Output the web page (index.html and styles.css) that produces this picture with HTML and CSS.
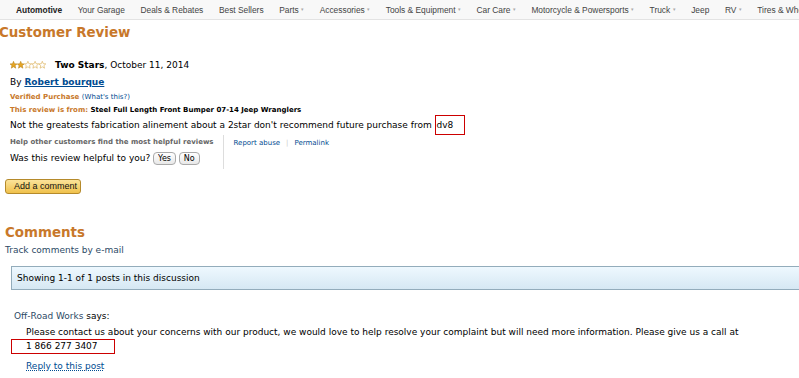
FILE: index.html
```html
<!DOCTYPE html>
<html>
<head>
  <meta charset="UTF-8">
  <title>Customer Review</title>
  <link rel="stylesheet" href="styles.css">
</head>
<body>
  <div class="topnav">
    <span class="nav-item active">Automotive</span>
    <span class="nav-item">Your Garage</span>
    <span class="nav-item">Deals &amp; Rebates</span>
    <span class="nav-item">Best Sellers</span>
    <span class="nav-item">Parts <span class="caret">&#9662;</span></span>
    <span class="nav-item">Accessories <span class="caret">&#9662;</span></span>
    <span class="nav-item">Tools &amp; Equipment <span class="caret">&#9662;</span></span>
    <span class="nav-item">Car Care <span class="caret">&#9662;</span></span>
    <span class="nav-item">Motorcycle &amp; Powersports <span class="caret">&#9662;</span></span>
    <span class="nav-item">Truck <span class="caret">&#9662;</span></span>
    <span class="nav-item">Jeep</span>
    <span class="nav-item">RV <span class="caret">&#9662;</span></span>
    <span class="nav-item">Tires &amp; Wheels</span>
  </div>

  <h1 class="page-title">Customer Review</h1>

  <div class="review">
    <div class="review-head">
      <svg class="stars" width="36" height="8" viewBox="0 0 36 8">
        <polygon points="3.5,0.3 4.5,2.7 7,2.9 5.1,4.6 5.7,7.2 3.5,5.8 1.3,7.2 1.9,4.6 0,2.9 2.5,2.7" fill="#e5a524" stroke="#b07a10" stroke-width="0.5"/>
        <polygon transform="translate(7.2,0)" points="3.5,0.3 4.5,2.7 7,2.9 5.1,4.6 5.7,7.2 3.5,5.8 1.3,7.2 1.9,4.6 0,2.9 2.5,2.7" fill="#e5a524" stroke="#b07a10" stroke-width="0.5"/>
        <polygon transform="translate(14.4,0)" points="3.5,0.3 4.5,2.7 7,2.9 5.1,4.6 5.7,7.2 3.5,5.8 1.3,7.2 1.9,4.6 0,2.9 2.5,2.7" fill="#fff" stroke="#d9a94a" stroke-width="0.6"/>
        <polygon transform="translate(21.6,0)" points="3.5,0.3 4.5,2.7 7,2.9 5.1,4.6 5.7,7.2 3.5,5.8 1.3,7.2 1.9,4.6 0,2.9 2.5,2.7" fill="#fff" stroke="#d9a94a" stroke-width="0.6"/>
        <polygon transform="translate(28.8,0)" points="3.5,0.3 4.5,2.7 7,2.9 5.1,4.6 5.7,7.2 3.5,5.8 1.3,7.2 1.9,4.6 0,2.9 2.5,2.7" fill="#fff" stroke="#d9a94a" stroke-width="0.6"/>
      </svg>
      <span><b>Two Stars</b>, October 11, 2014</span>
    </div>
    <div class="byline">By <a class="author">Robert bourque</a></div>
    <div class="verified">Verified Purchase <span class="whats">(<a>What's this?</a>)</span></div>
    <div class="from"><span class="from-label">This review is from:</span> Steel Full Length Front Bumper 07-14 Jeep Wranglers</div>
    <p class="review-text">Not the greatests fabrication alinement about a 2star don't recommend future purchase from <span class="marked">dv8</span></p>

    <div class="helpful-row">
      <div class="helpful">
        <div class="helpful-note">Help other customers find the most helpful reviews</div>
        <div class="helpful-ask">Was this review helpful to you? <span class="vote">Yes</span> <span class="vote">No</span></div>
      </div>
      <div class="review-links">
        <a>Report abuse</a><span class="sep">|</span><a>Permalink</a>
      </div>
    </div>

    <span class="add-comment">Add a comment</span>
  </div>

  <div class="comments">
    <h2 class="comments-title">Comments</h2>
    <div class="track">Track comments by e-mail</div>
    <div class="posts-bar">Showing 1-1 of 1 posts in this discussion</div>

    <div class="post">
      <div class="post-author"><a>Off-Road Works</a> says:</div>
      <div class="post-body">
        Please contact us about your concerns with our product, we would love to help resolve your complaint but will need more information. Please give us a call at<br>
        <span class="phone">1 866 277 3407</span>
      </div>
      <a class="reply">Reply to this post</a>
    </div>
  </div>
</body>
</html>
```

FILE: styles.css
```css
* {
  margin: 0;
  padding: 0;
  box-sizing: border-box;
}

body {
  font-family: "DejaVu Sans", Verdana, sans-serif;
  font-size: 9px;
  color: #000;
  background: #fff;
  overflow: hidden;
}

a {
  color: #004b91;
}

.topnav {
  display: flex;
  height: 20px;
  align-items: center;
  padding-left: 16px;
  background: #f8f8f8;
  border-bottom: 1px solid #e3e3e3;
  font-family: "Liberation Sans", Arial, sans-serif;
  font-size: 8.4px;
  color: #444;
  white-space: nowrap;
  overflow: hidden;
}

.nav-item {
  margin-right: 15.6px;
}

.nav-item.active {
  font-weight: bold;
  color: #222;
}

.caret {
  font-size: 5px;
  color: #aaa;
  vertical-align: 2px;
}

.page-title {
  font-size: 13.4px;
  font-weight: bold;
  color: #c8782a;
  margin: 3px 0 0 -1px;
  line-height: 20px;
}

.review {
  padding: 15px 0 0 10px;
}

.review-head {
  display: flex;
  align-items: center;
  gap: 9px;
  line-height: 14px;
}

.stars {
  display: block;
}

.byline {
  margin-top: 3px;
  line-height: 14px;
}

.author {
  font-weight: bold;
  text-decoration: underline;
}

.verified {
  margin-top: 2px;
  font-size: 7px;
  font-weight: bold;
  color: #c8782a;
  line-height: 12px;
}

.whats {
  font-weight: normal;
  color: #004b91;
}

.from {
  font-size: 7px;
  font-weight: bold;
  line-height: 12px;
  margin-top: 1px;
}

.from-label {
  color: #c8782a;
}

.review-text {
  line-height: 17px;
  margin-top: -1px;
}

.marked {
  display: inline-block;
  border: 1.5px solid #c00;
  padding: 1px 11px 1px 1px;
  line-height: 16px;
}

.helpful-row {
  display: flex;
  margin-top: 0;
}

.helpful {
  padding-right: 9px;
  border-right: 1px solid #ddd;
  padding-top: 2px;
  padding-bottom: 4px;
}

.helpful-note {
  font-size: 7px;
  font-weight: bold;
  color: #666;
  line-height: 10px;
}

.helpful-ask {
  margin-top: 4px;
  line-height: 14px;
}

.vote {
  display: inline-block;
  font-size: 8px;
  padding: 0 4px;
  border: 1px solid #aaa;
  border-radius: 4px;
  background: linear-gradient(#fff, #e8e8e8);
  line-height: 11px;
}

.review-links {
  padding: 3px 0 0 10px;
  font-size: 7px;
  line-height: 10px;
}

.review-links a {
  color: #004b91;
}

.sep {
  color: #ccc;
  margin: 0 6px;
}

.add-comment {
  display: inline-block;
  margin: 10px 0 0 -5px;
  width: 76px;
  height: 15px;
  line-height: 13px;
  padding-left: 8px;
  font-family: "Liberation Sans", Arial, sans-serif;
  font-size: 9px;
  white-space: nowrap;
  color: #111;
  background: linear-gradient(#fbe39a, #f0c14b);
  border: 1px solid #b58a2b;
  border-radius: 3px;
}

.comments {
  padding: 30px 0 0 5px;
}

.comments-title {
  font-size: 13.4px;
  font-weight: bold;
  color: #c8782a;
  line-height: 18px;
}

.track {
  color: #2d4a66;
  line-height: 14px;
  margin-top: 1px;
}

.posts-bar {
  margin: 9px -10px 0 6px;
  height: 24px;
  line-height: 22px;
  padding-left: 5px;
  border: 1px solid #93acbb;
  background: linear-gradient(#eef8fe, #d6e8f3);
}

.post {
  padding: 19px 0 0 9px;
}

.post-author {
  line-height: 14px;
}

.post-author a {
  color: #2d4a66;
  text-decoration: none;
}

.post-body {
  padding-left: 12px;
  margin-top: 2px;
  line-height: 14px;
}

.phone {
  display: inline-block;
  margin-left: -15px;
  padding-left: 14px;
  width: 104px;
  border: 1.5px solid #c00;
  line-height: 13px;
}

.reply {
  display: inline-block;
  margin: 7px 0 0 12px;
  text-decoration: underline dotted;
}
```
